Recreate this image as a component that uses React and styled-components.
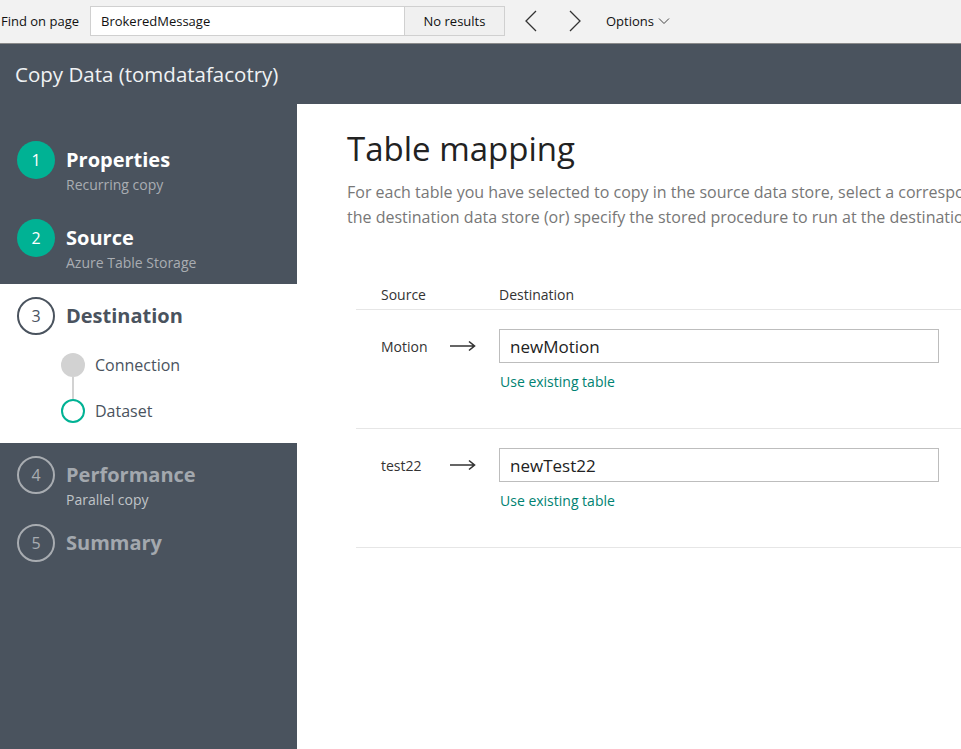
import React from 'react';
import styled, { createGlobalStyle } from 'styled-components';

const GlobalStyle = createGlobalStyle`
  html, body {
    margin: 0;
    padding: 0;
    height: 100%;
    overflow: hidden;
  }
  body {
    font-family: "Open Sans", "Noto Sans", sans-serif;
  }
`;

const Page = styled.div`
  width: 961px;
  height: 749px;
  display: flex;
  flex-direction: column;
  overflow: hidden;
  background: #4a535e;
`;

/* ---- find bar ---- */
const FindBar = styled.div`
  height: 43px;
  flex: none;
  display: flex;
  align-items: center;
  background: #f2f2f2;
  border-bottom: 1px solid #8a8a8a;
  font-size: 13px;
  color: #111;
  padding-bottom: 1px;
  box-sizing: border-box;
  height: 44px;
`;

const FindLabel = styled.span`
  padding-left: 1px;
  width: 89px;
`;

const FindBox = styled.div`
  display: flex;
  height: 30px;
  border: 1px solid #d0d0d0;
  box-sizing: border-box;
`;

const FindInput = styled.div`
  width: 303px;
  padding-left: 10px;
  background: #fff;
  display: flex;
  align-items: center;
`;

const FindResult = styled.div`
  width: 99px;
  background: #f0f0f0;
  border-left: 1px solid #d0d0d0;
  display: flex;
  align-items: center;
  justify-content: center;
`;

const NavButton = styled.button`
  border: none;
  background: none;
  padding: 0;
  width: 44px;
  height: 30px;
  display: flex;
  align-items: center;
  justify-content: center;
  margin-left: ${p => p.$first ? '4px' : '0'};
`;

const Options = styled.div`
  margin-left: 9px;
  display: flex;
  align-items: center;
  gap: 4px;
`;

/* ---- header ---- */
const Header = styled.div`
  height: 60px;
  flex: none;
  display: flex;
  align-items: center;
  padding-left: 15px;
  color: #f0f2f4;
  font-size: 20.5px;
`;

const Body = styled.div`
  flex: 1;
  display: flex;
`;

/* ---- sidebar ---- */
const Sidebar = styled.div`
  width: 297px;
  flex: none;
  padding-top: 37px;
`;

const Step = styled.div`
  display: flex;
  flex-direction: column;
  padding: 0 0 0 17px;
  height: ${p => p.$height}px;
  box-sizing: border-box;
  ${p => p.$active && `
    background: #fff;
    padding-top: 13px;
    margin-bottom: 13px;
  `}
`;

const StepHead = styled.div`
  display: flex;
  align-items: center;
  gap: 11px;
`;

const Circle = styled.div`
  width: 38px;
  height: 38px;
  border-radius: 50%;
  box-sizing: border-box;
  display: flex;
  align-items: center;
  justify-content: center;
  font-size: 16px;
  flex: none;
  background: ${p => p.$state === 'done' ? '#00b294' : 'transparent'};
  border: ${p => p.$state === 'done' ? 'none' : p.$state === 'active' ? '2px solid #4a535e' : '2px solid #a8acb1'};
  color: ${p => p.$state === 'done' ? '#fff' : p.$state === 'active' ? '#4a535e' : '#a8acb1'};
`;

const StepTitle = styled.div`
  font-size: 20px;
  font-weight: 700;
  color: ${p => p.$state === 'done' ? '#fff' : p.$state === 'active' ? '#4a535e' : '#a3a8ae'};
  line-height: 26px;
`;

const StepSub = styled.div`
  padding-left: 49px;
  margin-top: -4px;
  font-size: 14px;
  color: ${p => p.$state === 'done' ? '#a9adb2' : '#c0c4c8'};
`;

const SubSteps = styled.div`
  margin-top: 18px;
  padding-left: 44px;
  display: flex;
  flex-direction: column;
`;

const SubStep = styled.div`
  display: flex;
  align-items: center;
  gap: 10px;
  font-size: 16px;
  color: #4a535e;
  height: 24px;
`;

const Dot = styled.div`
  width: 24px;
  height: 24px;
  border-radius: 50%;
  box-sizing: border-box;
  background: ${p => p.$filled ? '#d2d2d2' : '#fff'};
  border: ${p => p.$filled ? 'none' : '2px solid #00b294'};
`;

const Connector = styled.div`
  width: 2px;
  height: 22px;
  margin-left: 11px;
  background: #d2d2d2;
`;

/* ---- main ---- */
const Main = styled.div`
  flex: 1;
  background: #fff;
  padding: 24px 0 0 50px;
  overflow: hidden;
  white-space: nowrap;
`;

const Title = styled.h1`
  margin: 0;
  font-size: 33px;
  font-weight: 400;
  color: #222;
  line-height: 42px;
`;

const Desc = styled.p`
  margin: 10px 0 0;
  font-size: 16px;
  line-height: 25px;
  color: #777;
`;

const MapTable = styled.div`
  margin: 50px 0 0 9px;
`;

const HeadRow = styled.div`
  display: flex;
  height: 29px;
  align-items: center;
  border-bottom: 1px solid #e6e6e6;
  font-size: 14px;
  color: #333;
`;

const SourceCell = styled.div`
  width: 118px;
  padding-left: 25px;
  flex: none;
`;

const MapRow = styled.div`
  display: flex;
  align-items: flex-start;
  height: 119px;
  padding-top: 19px;
  box-sizing: border-box;
  border-bottom: 1px solid #e6e6e6;
  font-size: 14px;
  color: #333;
`;

const RowLabel = styled.div`
  width: 69px;
  padding-left: 25px;
  height: 34px;
  flex: none;
  display: flex;
  align-items: center;
`;

const Arrow = styled.div`
  width: 49px;
  height: 34px;
  flex: none;
  display: flex;
  align-items: center;
`;

const DestCell = styled.div`
  display: flex;
  flex-direction: column;
`;

const TextInput = styled.div`
  width: 440px;
  height: 34px;
  box-sizing: border-box;
  border: 1px solid #bdbdbd;
  padding-left: 10px;
  display: flex;
  align-items: center;
  font-size: 17px;
  color: #222;
`;

const LinkText = styled.a`
  margin-top: 9px;
  margin-left: 1px;
  font-size: 14px;
  color: #008272;
  text-decoration: none;
`;

const ChevronLeft = () => (
  <svg width="14" height="22" viewBox="0 0 14 22" fill="none" stroke="#333" strokeWidth="1.3">
    <path d="M12 1 L2 11 L12 21" />
  </svg>
);

const ChevronRight = () => (
  <svg width="14" height="22" viewBox="0 0 14 22" fill="none" stroke="#333" strokeWidth="1.3">
    <path d="M2 1 L12 11 L2 21" />
  </svg>
);

const ChevronDown = () => (
  <svg width="12" height="8" viewBox="0 0 12 8" fill="none" stroke="#444" strokeWidth="1">
    <path d="M1 1.5 L6 6.5 L11 1.5" />
  </svg>
);

const ArrowIcon = () => (
  <svg width="26" height="12" viewBox="0 0 26 12" fill="none" stroke="#333" strokeWidth="1.6">
    <path d="M0 6 H24 M19 1.5 L24.5 6 L19 10.5" />
  </svg>
);

const steps = [
  { n: 1, title: 'Properties', sub: 'Recurring copy', state: 'done', height: 78 },
  { n: 2, title: 'Source', sub: 'Azure Table Storage', state: 'done', height: 65 },
  { n: 3, title: 'Destination', state: 'active', height: 159 },
  { n: 4, title: 'Performance', sub: 'Parallel copy', state: 'todo', height: 68 },
  { n: 5, title: 'Summary', state: 'todo', height: 68 },
];

const mappings = [
  { source: 'Motion', dest: 'newMotion' },
  { source: 'test22', dest: 'newTest22' },
];

const App = () => {
  return (
    <Page>
      <GlobalStyle />
      <FindBar>
        <FindLabel>Find on page</FindLabel>
        <FindBox>
          <FindInput>BrokeredMessage</FindInput>
          <FindResult>No results</FindResult>
        </FindBox>
        <NavButton $first><ChevronLeft /></NavButton>
        <NavButton><ChevronRight /></NavButton>
        <Options>Options <ChevronDown /></Options>
      </FindBar>

      <Header>Copy Data (tomdatafacotry)</Header>

      <Body>
        <Sidebar>
          {steps.map(s => (
            <Step key={s.n} $active={s.state === 'active'} $height={s.height}>
              <StepHead>
                <Circle $state={s.state}>{s.n}</Circle>
                <StepTitle $state={s.state}>{s.title}</StepTitle>
              </StepHead>
              {s.sub && <StepSub $state={s.state}>{s.sub}</StepSub>}
              {s.state === 'active' && (
                <SubSteps>
                  <SubStep><Dot $filled />Connection</SubStep>
                  <Connector />
                  <SubStep><Dot />Dataset</SubStep>
                </SubSteps>
              )}
            </Step>
          ))}
        </Sidebar>

        <Main>
          <Title>Table mapping</Title>
          <Desc>
            For each table you have selected to copy in the source data store, select a corresponding table in
            <br />
            the destination data store (or) specify the stored procedure to run at the destination.
          </Desc>
          <MapTable>
            <HeadRow>
              <SourceCell>Source</SourceCell>
              <div>Destination</div>
            </HeadRow>
            {mappings.map(m => (
              <MapRow key={m.source}>
                <RowLabel>{m.source}</RowLabel>
                <Arrow><ArrowIcon /></Arrow>
                <DestCell>
                  <TextInput>{m.dest}</TextInput>
                  <LinkText href="#">Use existing table</LinkText>
                </DestCell>
              </MapRow>
            ))}
          </MapTable>
        </Main>
      </Body>
    </Page>
  );
};

export default App;
